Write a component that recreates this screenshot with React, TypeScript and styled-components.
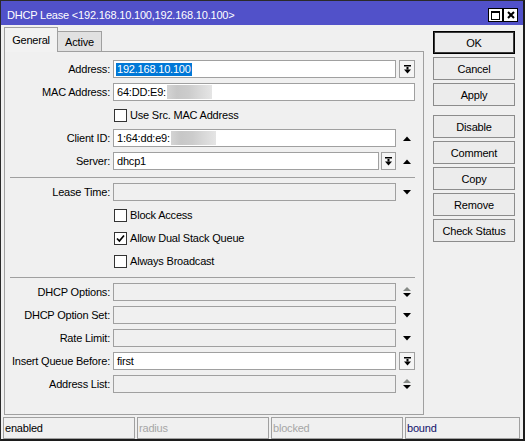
import React from 'react';
import styled, { createGlobalStyle, css } from 'styled-components';

const GlobalStyle = createGlobalStyle`
  * { box-sizing: border-box; }
  html, body { margin: 0; padding: 0; background: #fff; }
  body {
    font-family: "Liberation Sans", Arial, sans-serif;
    font-size: 11px;
    letter-spacing: -0.2px;
    color: #000;
  }
`;

const UpIcon = () => (
  <svg width="8" height="5" viewBox="0 0 8 5">
    <polygon points="0,5 8,5 4,0.5" fill="#000" />
  </svg>
);

const DownIcon = () => (
  <svg width="8" height="5" viewBox="0 0 8 5">
    <polygon points="0,0 8,0 4,4.5" fill="#000" />
  </svg>
);

const UpDownIcon = () => (
  <svg width="8" height="10" viewBox="0 0 8 10">
    <polygon points="0,4 8,4 4,0" fill="#868a86" />
    <polygon points="0,6 8,6 4,10" fill="#000" />
  </svg>
);

const DropIcon = () => (
  <svg width="7" height="9" viewBox="0 0 7 9">
    <rect x="0" y="0" width="7" height="1.5" fill="#000" />
    <rect x="2.5" y="2" width="2" height="2.5" fill="#000" />
    <polygon points="0,4.5 7,4.5 3.5,8.5" fill="#000" />
  </svg>
);

const CheckMark = () => (
  <svg width="9" height="9" viewBox="0 0 9 9">
    <path d="M1 4.5 L3.4 7 L8 1.5" stroke="#000" strokeWidth="1.7" fill="none" />
  </svg>
);

const MaxIcon = () => (
  <svg width="9" height="9" viewBox="0 0 9 9">
    <rect x="0.5" y="0.5" width="8" height="8" stroke="#000" fill="none" />
    <rect x="0" y="0" width="9" height="2" fill="#000" />
  </svg>
);

const CloseIcon = () => (
  <svg width="8" height="8" viewBox="0 0 8 8">
    <path d="M1 1 L7 7 M7 1 L1 7" stroke="#000" strokeWidth="2" />
  </svg>
);

type StatusCell = { text: string; color: string; width?: number };

const statusCells: StatusCell[] = [
  { text: 'enabled', color: '#000', width: 132 },
  { text: 'radius', color: '#a6a6a6', width: 132 },
  { text: 'blocked', color: '#a6a6a6', width: 132 },
  { text: 'bound', color: '#10106a' },
];

export default function App() {
  return (
    <>
      <GlobalStyle />
      <Window>
        <TitleBar>
          <Title>DHCP Lease &lt;192.168.10.100,192.168.10.100&gt;</Title>
          <TitleButtons>
            <TitleButton><MaxIcon /></TitleButton>
            <TitleButton><CloseIcon /></TitleButton>
          </TitleButtons>
        </TitleBar>

        <Main>
          <LeftColumn>
            <TabRow>
              <Tab $selected>General</Tab>
              <Tab>Active</Tab>
            </TabRow>
            <Panel>
              <Row>
                <Label>Address:</Label>
                <Field>
                  <TextBox>
                    <Value $selected>192.168.10.100</Value>
                  </TextBox>
                  <DropButton><DropIcon /></DropButton>
                </Field>
              </Row>
              <Row>
                <Label>MAC Address:</Label>
                <Field>
                  <TextBox>
                    <Value>64:DD:E9:</Value>
                    <Blur />
                  </TextBox>
                </Field>
              </Row>
              <CheckRow>
                <CheckBox />
                <span>Use Src. MAC Address</span>
              </CheckRow>
              <Row>
                <Label>Client ID:</Label>
                <Field>
                  <TextBox>
                    <Value>1:64:dd:e9:</Value>
                    <Blur />
                  </TextBox>
                  <Side><UpIcon /></Side>
                </Field>
              </Row>
              <Row>
                <Label>Server:</Label>
                <Field>
                  <TextBox>
                    <Value>dhcp1</Value>
                  </TextBox>
                  <DropButton $small><DropIcon /></DropButton>
                  <Side><UpIcon /></Side>
                </Field>
              </Row>

              <Separator />

              <Row>
                <Label>Lease Time:</Label>
                <Field>
                  <TextBox $disabled />
                  <Side><DownIcon /></Side>
                </Field>
              </Row>
              <CheckRow>
                <CheckBox />
                <span>Block Access</span>
              </CheckRow>
              <CheckRow>
                <CheckBox><CheckMark /></CheckBox>
                <span>Allow Dual Stack Queue</span>
              </CheckRow>
              <CheckRow>
                <CheckBox />
                <span>Always Broadcast</span>
              </CheckRow>

              <Separator />

              <Row>
                <Label>DHCP Options:</Label>
                <Field>
                  <TextBox $disabled />
                  <Side><UpDownIcon /></Side>
                </Field>
              </Row>
              <Row>
                <Label>DHCP Option Set:</Label>
                <Field>
                  <TextBox $disabled />
                  <Side><DownIcon /></Side>
                </Field>
              </Row>
              <Row>
                <Label>Rate Limit:</Label>
                <Field>
                  <TextBox $disabled />
                  <Side><DownIcon /></Side>
                </Field>
              </Row>
              <Row>
                <Label>Insert Queue Before:</Label>
                <Field>
                  <TextBox>
                    <Value>first</Value>
                  </TextBox>
                  <DropButton><DropIcon /></DropButton>
                </Field>
              </Row>
              <Row>
                <Label>Address List:</Label>
                <Field>
                  <TextBox $disabled />
                  <Side><UpDownIcon /></Side>
                </Field>
              </Row>
            </Panel>
          </LeftColumn>

          <ButtonColumn>
            <ActionButton $default>OK</ActionButton>
            <ActionButton>Cancel</ActionButton>
            <ActionButton>Apply</ActionButton>
            <ActionButton $spaced>Disable</ActionButton>
            <ActionButton>Comment</ActionButton>
            <ActionButton>Copy</ActionButton>
            <ActionButton>Remove</ActionButton>
            <ActionButton>Check Status</ActionButton>
          </ButtonColumn>
        </Main>

        <StatusBar>
          {statusCells.map(cell => (
            <StatusItem key={cell.text} $color={cell.color} $width={cell.width}>
              {cell.text}
            </StatusItem>
          ))}
        </StatusBar>
      </Window>
    </>
  );
}

const Window = styled.div`
  width: 525px;
  height: 441px;
  display: flex;
  flex-direction: column;
  background: #f0f0f0;
  border-top: 1px solid #2a2a2a;
  border-left: 1px solid #2a2a2a;
  border-right: 2px solid #1c1c1c;
  border-bottom: 2px solid #1c1c1c;
`;

const TitleBar = styled.div`
  height: 24px;
  flex: none;
  display: flex;
  align-items: center;
  padding: 4px 5px 0 6px;
  background: #5151c9;
  color: #fff;
`;

const Title = styled.div`
  white-space: nowrap;
`;

const TitleButtons = styled.div`
  margin-left: auto;
  display: flex;
`;

const TitleButton = styled.div`
  width: 15px;
  height: 14px;
  display: flex;
  align-items: center;
  justify-content: center;
  background: #fff;
  border: 1px solid #000;
`;

const Main = styled.div`
  flex: 1;
  display: flex;
  padding-bottom: 2px;
  min-height: 0;
`;

const LeftColumn = styled.div`
  width: 420px;
  margin: 2px 0 0 3px;
  display: flex;
  flex-direction: column;
`;

const TabRow = styled.div`
  height: 25px;
  flex: none;
  display: flex;
  align-items: flex-end;
`;

const Tab = styled.div<{ $selected?: boolean }>`
  display: flex;
  align-items: center;
  justify-content: center;
  border: 1px solid #a0a0a0;
  border-bottom: none;
  ${p =>
    p.$selected
      ? css`
          width: 54px;
          height: 25px;
          background: #f2f2f2;
          position: relative;
          z-index: 1;
        `
      : css`
          width: 45px;
          height: 21px;
          margin-left: -1px;
          background: #e1e1e1;
        `}
`;

const Panel = styled.div`
  flex: 1;
  margin-top: -1px;
  border: 1px solid #a0a0a0;
  padding: 8px 8px 0 5px;
  display: flex;
  flex-direction: column;
  gap: 5px;
`;

const Row = styled.div`
  display: grid;
  grid-template-columns: 100px 1fr;
  column-gap: 3px;
  height: 18px;
  align-items: center;
`;

const Label = styled.div`
  text-align: right;
  white-space: nowrap;
`;

const Field = styled.div`
  display: flex;
  height: 18px;
`;

const TextBox = styled.div<{ $disabled?: boolean }>`
  flex: 1;
  min-width: 0;
  height: 18px;
  display: flex;
  align-items: center;
  padding-left: 2px;
  white-space: nowrap;
  overflow: hidden;
  border: 1px solid #a0a0a0;
  background: ${p => (p.$disabled ? '#f0f0f0' : '#fff')};
`;

const Value = styled.span<{ $selected?: boolean }>`
  padding: 0 1px;
  line-height: 13px;
  ${p =>
    p.$selected &&
    css`
      background: #0078d7;
      color: #fff;
    `}
`;

const Blur = styled.span`
  display: inline-block;
  width: 45px;
  height: 14px;
  background: linear-gradient(
    90deg,
    #d4d4d4 0%,
    #c7c7c7 22%,
    #cccccc 48%,
    #d8d8d8 72%,
    #e5e5e5 100%
  );
`;

const DropButton = styled.div<{ $small?: boolean }>`
  flex: none;
  width: ${p => (p.$small ? 15 : 16)}px;
  height: 18px;
  margin-left: ${p => (p.$small ? 2 : 3)}px;
  display: flex;
  align-items: center;
  justify-content: center;
  border: 1px solid #a0a0a0;
  background: #f5f5f5;
`;

const Side = styled.div`
  flex: none;
  width: 19px;
  padding-left: 3px;
  display: flex;
  align-items: center;
  justify-content: center;
`;

const CheckRow = styled.div`
  height: 18px;
  display: flex;
  align-items: center;
  gap: 3px;
  padding-left: 104px;
  white-space: nowrap;
`;

const CheckBox = styled.div`
  width: 13px;
  height: 13px;
  flex: none;
  display: flex;
  align-items: center;
  justify-content: center;
  background: #fff;
  border: 1px solid #333;
`;

const Separator = styled.div`
  height: 0;
  margin-top: 2px;
  border-top: 1px solid #a0a0a0;
`;

const ButtonColumn = styled.div`
  width: 82px;
  margin: 6px 0 0 9px;
  display: flex;
  flex-direction: column;
  gap: 3px;
`;

const ActionButton = styled.button<{ $default?: boolean; $spaced?: boolean }>`
  width: 82px;
  height: 23px;
  padding: 0;
  font: inherit;
  letter-spacing: inherit;
  color: #000;
  background: #ececec;
  border: 1px solid #8c8c8c;
  margin-top: ${p => (p.$spaced ? 6 : 0)}px;
  ${p =>
    p.$default &&
    css`
      border-color: #000;
      box-shadow: inset 0 0 0 1px #3a3a3a;
    `}
`;

const StatusBar = styled.div`
  height: 22px;
  flex: none;
  display: flex;
  gap: 2px;
  padding: 0 3px 0 2px;
`;

const StatusItem = styled.div<{ $color: string; $width?: number }>`
  ${p => (p.$width ? `width: ${p.$width}px; flex: none;` : 'flex: 1;')}
  display: flex;
  align-items: center;
  padding-left: 1px;
  border: 1px solid #a0a0a0;
  color: ${p => p.$color};
`;
